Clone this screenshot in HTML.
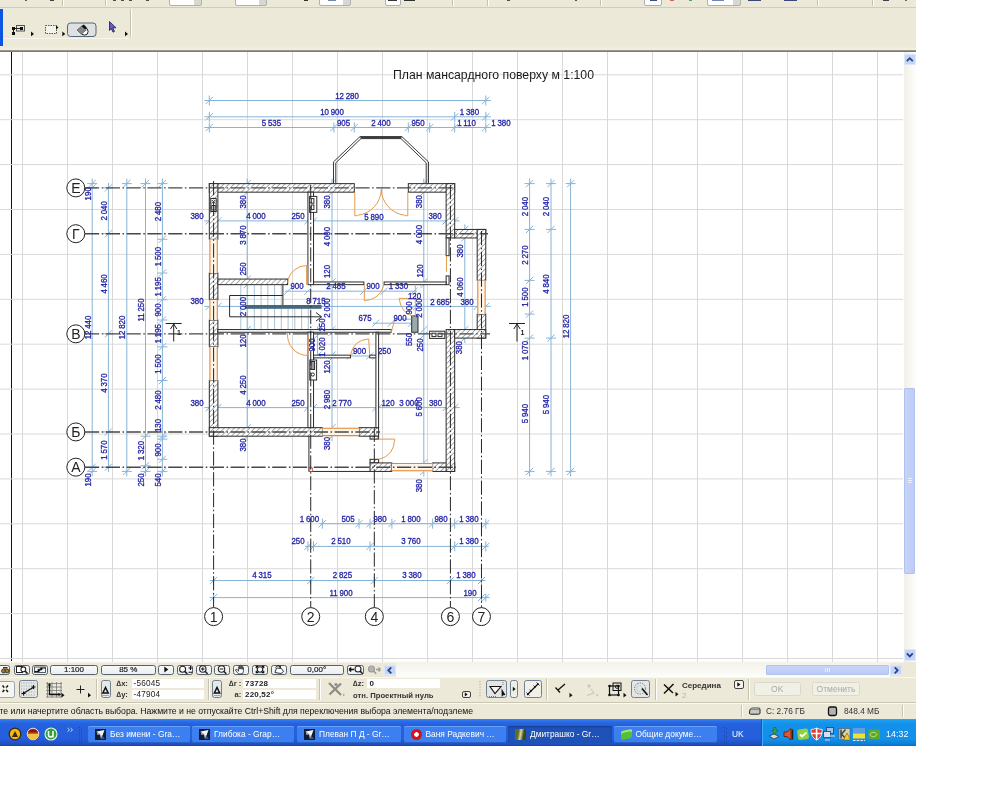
<!DOCTYPE html>
<html lang="ru"><head><meta charset="utf-8"><title>План мансардного поверху</title>
<style>
html,body{margin:0;padding:0;background:#fff}
body{width:1000px;height:800px;position:relative;overflow:hidden;font-family:"Liberation Sans",sans-serif;font-size:8px;color:#222}
.a{position:absolute}
.bg{background:#ece9d8}
.btn{-webkit-text-stroke:.2px #222;position:absolute;box-sizing:border-box;border:1px solid #56616e;border-radius:2.5px;background:linear-gradient(#f6f8fa,#eceff0);text-align:center;color:#222;font-size:8px;line-height:8.5px}
.fld{position:absolute;background:#fff;height:9px}
.lbl{position:absolute;font-weight:bold;font-size:7.6px;color:#333;white-space:nowrap;line-height:9px}
.val{position:absolute;font-size:8.2px;color:#222;white-space:nowrap;line-height:9px;letter-spacing:.2px}
.sep{position:absolute;width:1px;background:#c5c2b0;box-shadow:1px 0 0 #fff}
.tb{position:absolute;top:726px;height:17px;border-radius:2px;background:#3c7ff0;box-shadow:inset 0 1px 0 #6aa0fa,inset 0 -1px 0 #2a60c8;color:#fff;font-size:8.4px;line-height:16px;white-space:nowrap;overflow:hidden}
.tb span{position:absolute;left:22px;top:0}
.tb i{position:absolute;left:7px;top:3px;width:11px;height:11px;display:block}
</style></head>
<body>
<div id="ui" style="position:absolute;left:0;top:0;width:1000px;height:800px;will-change:transform;transform:translateZ(0)">
<div class="a bg" style="left:0;top:0;width:916px;height:8px;border-bottom:1px solid #cfccbb;box-sizing:border-box"></div>
<div class="a" style="left:169px;top:-3px;width:33px;height:9px;border:1px solid #a9b0b8;border-radius:2px;box-sizing:border-box;background:linear-gradient(90deg,#fff 24px,#d9d8d0 24px)"></div>
<div class="a" style="left:234.5px;top:-3px;width:32px;height:9px;border:1px solid #a9b0b8;border-radius:2px;box-sizing:border-box;background:linear-gradient(90deg,#fff 23px,#d9d8d0 23px)"></div>
<div class="a" style="left:318.5px;top:-3px;width:32px;height:9px;border:1px solid #a9b0b8;border-radius:2px;box-sizing:border-box;background:linear-gradient(90deg,#fff 23px,#d9d8d0 23px)"></div>
<div class="a" style="left:385px;top:-3px;width:16px;height:9px;border:1px solid #a9b0b8;border-radius:2px;box-sizing:border-box;background:linear-gradient(90deg,#fff 16px,#d9d8d0 16px)"></div>
<div class="a" style="left:644px;top:-3px;width:18px;height:9px;border:1px solid #a9b0b8;border-radius:2px;box-sizing:border-box;background:linear-gradient(90deg,#fff 18px,#d9d8d0 18px)"></div>
<div class="a" style="left:707px;top:-3px;width:34px;height:9px;border:1px solid #a9b0b8;border-radius:2px;box-sizing:border-box;background:linear-gradient(90deg,#fff 25px,#d9d8d0 25px)"></div>
<div class="a" style="left:25px;top:0;width:2px;height:1.2px;background:#444;opacity:.85"></div>
<div class="a" style="left:50px;top:0;width:4px;height:1.2px;background:#223;opacity:.85"></div>
<div class="a" style="left:113px;top:0;width:3px;height:1.2px;background:#333;opacity:.85"></div>
<div class="a" style="left:121px;top:0;width:3px;height:1.2px;background:#333;opacity:.85"></div>
<div class="a" style="left:129px;top:0;width:3px;height:1.2px;background:#333;opacity:.85"></div>
<div class="a" style="left:146px;top:0;width:3px;height:1.2px;background:#333;opacity:.85"></div>
<div class="a" style="left:304px;top:0;width:4px;height:1.2px;background:#111;opacity:.85"></div>
<div class="a" style="left:328px;top:0;width:8px;height:1.2px;background:#5a6ea8;opacity:.85"></div>
<div class="a" style="left:387.5px;top:0;width:9px;height:1.2px;background:#111;opacity:.85"></div>
<div class="a" style="left:404px;top:0;width:11px;height:1.2px;background:#111;opacity:.85"></div>
<div class="a" style="left:507px;top:0;width:3px;height:1.2px;background:#333;opacity:.85"></div>
<div class="a" style="left:575px;top:0;width:2px;height:1.2px;background:#333;opacity:.85"></div>
<div class="a" style="left:650px;top:0;width:7px;height:1.2px;background:#1c2a66;opacity:.85"></div>
<div class="a" style="left:669.5px;top:0;width:4px;height:1.2px;background:#d8463c;opacity:.85"></div>
<div class="a" style="left:689px;top:0;width:3px;height:1.2px;background:#3a9a3a;opacity:.85"></div>
<div class="a" style="left:712px;top:0;width:12px;height:1.2px;background:#5a6ea8;opacity:.85"></div>
<div class="a" style="left:748px;top:0;width:13px;height:1.2px;background:#1c2a66;opacity:.85"></div>
<div class="a" style="left:784px;top:0;width:13px;height:1.2px;background:#1c2a66;opacity:.85"></div>
<div class="a" style="left:883px;top:0;width:6px;height:1.2px;background:#223;opacity:.85"></div>
<div class="a" style="left:905px;top:0;width:2px;height:1.2px;background:#555;opacity:.85"></div>
<div class="sep" style="left:62px;top:0;height:6px"></div>
<div class="sep" style="left:105px;top:0;height:6px"></div>
<div class="sep" style="left:452px;top:0;height:6px"></div>
<div class="sep" style="left:487px;top:0;height:6px"></div>
<div class="sep" style="left:600px;top:0;height:6px"></div>
<div class="sep" style="left:816.5px;top:0;height:6px"></div>
<div class="sep" style="left:872px;top:0;height:6px"></div>
<div class="a bg" style="left:0;top:8px;width:916px;height:43px"></div>
<div class="a" style="left:0;top:9px;width:3px;height:39px;background:#0b55e0"></div>
<div class="a" style="left:4px;top:38px;width:125px;height:1px;background:#f7f6ee"></div>
<div class="sep" style="left:130px;top:9px;height:28px"></div>
<div class="a" style="left:0;top:46px;width:916px;height:4px;background:linear-gradient(#ece9d8,#f3f1e6)"></div>
<div class="a" style="left:0;top:50px;width:916px;height:2px;background:linear-gradient(#a7a595,#6f6e64)"></div>
<svg class="a" style="left:0;top:8px" width="140" height="44" viewBox="0 8 140 44"><g fill="none" stroke="#222" stroke-width="1"><rect x="16.5" y="25.5" width="8" height="5.5" stroke="#555"/><path d="M13.5 28.5H21.5M13.5 28.5V33.5"/></g><rect x="12" y="27" width="3" height="3" fill="#111"/><rect x="20" y="27" width="3" height="3" fill="#111"/><rect x="12" y="32" width="3" height="3" fill="#111"/><path d="M31 31.5l3 2.4-3 2.4z" fill="#111"/><rect x="45.5" y="25.5" width="11" height="8" fill="#f4f3ec" stroke="#555" stroke-width="1" stroke-dasharray="1.5 1"/><path d="M56 25.5l2.5 2-2.5 2z" fill="#111"/><path d="M62.3 31.5l3 2.4-3 2.4z" fill="#111"/><rect x="67.5" y="23" width="28.5" height="13.5" rx="3" fill="#dde1e2" stroke="#56677a" stroke-width="1"/><circle cx="84.5" cy="31.5" r="3.6" fill="#fff" stroke="#222" stroke-width="1"/><path d="M77 30l5-4.2 4.3 4.2-5 4.2z" fill="#888" stroke="#333" stroke-width=".5"/><path d="M81.5 26.2l2.2-1.8 3.2 3-2 1.8z" fill="#111"/><path d="M109.5 21.5l6.5 6.3h-3.3l1.8 3.6-1.5.8-1.8-3.7-1.7 2z" fill="#6a5acd" stroke="#1b1b4a" stroke-width=".8"/><path d="M125 31.5l3 2.4-3 2.4z" fill="#111"/></svg>
<div class="a" style="left:0;top:52px;width:903.5px;height:610px;background:#fff"></div>
<div class="a" style="left:11px;top:52px;width:1.3px;height:610px;background:#111"></div>
<div class="a" style="left:903.5px;top:52px;width:12.5px;height:610px;background:linear-gradient(90deg,#f1f0e8,#fdfdfb)"></div>
<div class="a" style="left:904px;top:53.5px;width:11.5px;height:11px;background:#c3d3f9;border-radius:2px;box-shadow:inset 0 0 0 1px #dde7fc"></div>
<svg class="a" style="left:904px;top:53.5px" width="12" height="11"><path d="M2.8 7.2L5.8 4.2L8.8 7.2" fill="none" stroke="#28457f" stroke-width="1.8"/></svg>
<div class="a" style="left:904px;top:388px;width:11px;height:186px;background:linear-gradient(90deg,#c9d5f8,#bccbf5);border-radius:2px;box-shadow:inset 0 0 0 1px #b1c2f1"></div>
<div class="a" style="left:907.5px;top:478px;width:4px;height:1px;background:#eef;box-shadow:0 2px 0 #eef,0 4px 0 #eef"></div>
<div class="a" style="left:904px;top:649px;width:11.5px;height:11.5px;background:#c3d3f9;border-radius:2px;box-shadow:inset 0 0 0 1px #dde7fc"></div>
<svg class="a" style="left:904px;top:649px" width="12" height="12"><path d="M2.8 4.4L5.8 7.4L8.8 4.4" fill="none" stroke="#28457f" stroke-width="1.8"/></svg>
<div class="a bg" style="left:0;top:662px;width:916px;height:15px"></div>
<div class="a" style="left:396px;top:663px;width:494px;height:13.5px;background:linear-gradient(#f3f2ea,#fdfdfa)"></div>
<div class="a" style="left:0;top:661px;width:903.5px;height:2px;background:linear-gradient(#fff,#f1efe4)"></div>
<div class="btn" style="left:-6px;top:664.5px;width:16px;height:10.2px"></div>
<div class="btn" style="left:13.6px;top:664.5px;width:16px;height:10.2px"></div>
<div class="btn" style="left:32px;top:664.5px;width:16px;height:10.2px"></div>
<div class="btn" style="left:50.4px;top:664.5px;width:47.2px;height:10.2px">1:100</div>
<div class="btn" style="left:100.5px;top:664.5px;width:55.5px;height:10.2px">85 %</div>
<div class="btn" style="left:158.3px;top:664.5px;width:16px;height:10.2px"></div>
<div class="btn" style="left:176.9px;top:664.5px;width:16.6px;height:10.2px"></div>
<div class="btn" style="left:195.6px;top:664.5px;width:16px;height:10.2px"></div>
<div class="btn" style="left:214.3px;top:664.5px;width:16px;height:10.2px"></div>
<div class="btn" style="left:233.2px;top:664.5px;width:16px;height:10.2px"></div>
<div class="btn" style="left:252px;top:664.5px;width:16px;height:10.2px"></div>
<div class="btn" style="left:270.8px;top:664.5px;width:16.5px;height:10.2px"></div>
<div class="btn" style="left:289.5px;top:664.5px;width:54.5px;height:10.2px">0,00°</div>
<div class="btn" style="left:347.2px;top:664.5px;width:16.5px;height:10.2px"></div>
<svg class="a" style="left:0;top:662px" width="400" height="15" viewBox="0 662 400 15"><circle cx="3.5" cy="671" r="2" fill="#b08020" stroke="#222" stroke-width=".8"/><circle cx="7" cy="671" r="2" fill="#b08020" stroke="#222" stroke-width=".8"/><path d="M3 668.5h4.5v-1.5h-4.5z" fill="#333"/><rect x="16.5" y="666.5" width="6" height="6" fill="#fff" stroke="#222" stroke-width="1"/><circle cx="23.3" cy="669.3" r="2.4" fill="#fff" stroke="#222" stroke-width="1.1"/><path d="M25 671l2.6 2.6" stroke="#222" stroke-width="1.6"/><path d="M34.5 671.5h4l3-3.5h4" fill="none" stroke="#111" stroke-width="1.2"/><rect x="34.5" y="667" width="11" height="5.5" fill="none" stroke="#333" stroke-width=".8"/><path d="M37 670l2.5-1.8v3.6zM43 669l-2.5-1.8v3.6z" fill="#111"/><path d="M164.3 666.6l4 3-4 3z" fill="#111"/><circle cx="182.6" cy="669.2" r="3" fill="#fff" stroke="#222" stroke-width="1.1"/><path d="M184.7 671.3l2.6 2.6" stroke="#222" stroke-width="1.6"/><path d="M188.5 668h4M190.5 666v4M188.5 672.2h4" stroke="#111" stroke-width="1.1"/><circle cx="202.8" cy="669" r="3.2" fill="#fff" stroke="#222" stroke-width="1.1"/><path d="M205 671.2l2.6 2.6" stroke="#222" stroke-width="1.6"/><path d="M201 669h3.6M202.8 667.2v3.6" stroke="#111" stroke-width="1"/><circle cx="221.5" cy="669" r="3.2" fill="#fff" stroke="#222" stroke-width="1.1"/><path d="M223.7 671.2l2.6 2.6" stroke="#222" stroke-width="1.6"/><path d="M219.7 669h3.6" stroke="#111" stroke-width="1"/><path d="M237.3 669.6l1.3 1.7v-4.6q.6-.8 1.2 0v2.4v-3.4q.6-.8 1.2 0v3.4v-3q.6-.8 1.2 0v3.2v-2q.6-.7 1.2 0v4.2q0 2.4-2.4 2.4h-1.5q-1.2 0-2-1.2l-2.1-2.8q.4-.9 1.9-.3z" fill="#fff" stroke="#222" stroke-width=".8" stroke-linejoin="round"/><circle cx="260" cy="669.5" r="2.7" fill="#fff" stroke="#222" stroke-width="1.1"/><path d="M256.3 668.3v-2h2M263.7 668.3v-2h-2M256.3 670.7v2h2M263.7 670.7v2h-2" stroke="#111" stroke-width="1.2" fill="none"/><path d="M275 672.5l1.5-4.5 5 .5 2 3-2.5 2z" fill="#fff" stroke="#222" stroke-width=".9"/><path d="M275.5 667.5c1-1.8 3-2 4.5-1" fill="none" stroke="#111" stroke-width="1"/><path d="M280.8 665.5l.3 2.4-2.3-.6z" fill="#111"/><path d="M349 669.5h5M349 669.5l2.2-2M349 669.5l2.2 2" stroke="#111" stroke-width="1.3" fill="none"/><circle cx="358" cy="669" r="3" fill="#fff" stroke="#222" stroke-width="1.1"/><path d="M360.1 671.1l2.6 2.6" stroke="#222" stroke-width="1.6"/><circle cx="371.5" cy="669" r="3" fill="#b4b4b0" stroke="#9a9a9a" stroke-width="1.1"/><path d="M373.6 671.1l2.6 2.6" stroke="#9a9a9a" stroke-width="1.6"/><path d="M376 669.5h4.5M380.5 669.5l-2-2M380.5 669.5l-2 2" stroke="#9a9a9a" stroke-width="1.3" fill="none"/></svg>
<div class="a" style="left:384px;top:664.5px;width:12px;height:10.5px;background:#c3d3f9;border-radius:2px;box-shadow:inset 0 0 0 1px #dde7fc"></div>
<svg class="a" style="left:384px;top:664.5px" width="12" height="11"><path d="M7.3 2.3L4.3 5.3L7.3 8.3" fill="none" stroke="#28457f" stroke-width="1.8"/></svg>
<div class="a" style="left:766px;top:665px;width:122.5px;height:9.5px;background:linear-gradient(#c9d5f8,#bccbf5);border-radius:2px;box-shadow:inset 0 0 0 1px #b1c2f1"></div>
<div class="a" style="left:825px;top:667.5px;width:1px;height:4px;background:#eef;box-shadow:2px 0 0 #eef,4px 0 0 #eef"></div>
<div class="a" style="left:890px;top:664.5px;width:12px;height:10.5px;background:#c3d3f9;border-radius:2px;box-shadow:inset 0 0 0 1px #dde7fc"></div>
<svg class="a" style="left:890px;top:664.5px" width="12" height="11"><path d="M4.7 2.3L7.7 5.3L4.7 8.3" fill="none" stroke="#28457f" stroke-width="1.8"/></svg>
<div class="a bg" style="left:0;top:677px;width:916px;height:26px;border-top:1px solid #f8f7f0;box-sizing:border-box"></div>
<div class="a" style="left:0;top:702px;width:916px;height:1px;background:#c9c6b4"></div>
<div class="btn" style="left:-4px;top:680.5px;width:19.2px;height:17.5px;border-color:#9aa3ad;background:#f6f5ef"></div>
<div class="btn" style="left:19.2px;top:680px;width:19.2px;height:18px;border-color:#6f8194;background:#e3e6e4"></div>
<div class="sep" style="left:95.5px;top:679px;height:20px"></div>
<div class="btn" style="left:100.5px;top:679.8px;width:10px;height:18.4px;border-color:#6f8194;background:#e6e9ea"></div>
<div class="btn" style="left:212px;top:679.8px;width:10px;height:18.4px;border-color:#6f8194;background:#e6e9ea"></div>
<div class="fld" style="left:132px;top:679px;width:71.5px"></div><div class="fld" style="left:132px;top:690px;width:71.5px"></div>
<div class="fld" style="left:243px;top:679px;width:73px"></div><div class="fld" style="left:243px;top:690px;width:73px"></div>
<div class="fld" style="left:367px;top:679px;width:73px"></div>
<div class="sep" style="left:207.5px;top:679px;height:21px"></div><div class="sep" style="left:318.5px;top:679px;height:21px"></div>
<div class="lbl" style="left:116.5px;top:679.3px">∆x:</div><div class="lbl" style="left:116.5px;top:690.3px">∆y:</div>
<div class="val" style="left:133.5px;top:679.3px">-56045</div><div class="val" style="left:133.5px;top:690.3px">-47904</div>
<div class="lbl" style="left:229px;top:679.3px">∆r :</div><div class="lbl" style="left:234.5px;top:690.3px">a:</div>
<div class="val" style="left:245px;top:679.3px;font-weight:bold;font-size:8px">73728</div><div class="val" style="left:245px;top:690.3px;font-weight:bold;font-size:8px">220,52°</div>
<div class="lbl" style="left:353px;top:679.3px">∆z:</div><div class="val" style="left:369.5px;top:679.3px;font-weight:bold;font-size:8px">0</div>
<div class="lbl" style="left:353px;top:690.5px;font-size:7.7px;letter-spacing:0">отн. Проектный нуль</div>
<div class="btn" style="left:461.6px;top:690.5px;width:9px;height:7.7px;border-color:#444;background:#f4f3ee;border-radius:2px"></div>
<div class="btn" style="left:486px;top:679.8px;width:21.2px;height:18.4px;border-color:#6f8194;background:#e3e6e4"></div>
<div class="btn" style="left:509.6px;top:679.8px;width:8.8px;height:18.4px;border-color:#6f8194;background:#eceee8"></div>
<div class="btn" style="left:523.5px;top:679.8px;width:18.5px;height:18.4px;border-color:#6f8194;background:#f1f1ea"></div>
<div class="sep" style="left:546.4px;top:679px;height:21px"></div>
<div class="btn" style="left:631.3px;top:680px;width:18.7px;height:18px;border-color:#6f8194;background:#e3e6e4"></div>
<div class="sep" style="left:654.5px;top:679px;height:21px"></div>
<div class="lbl" style="left:682px;top:680.5px;font-size:8px">Середина</div><div class="lbl" style="left:682px;top:691px;color:#b5b3a6;font-weight:normal;font-size:8px">2</div>
<div class="btn" style="left:733.7px;top:679.8px;width:10px;height:9.2px;border-color:#444;background:#f4f3ee;border-radius:2px"></div>
<div class="sep" style="left:748.4px;top:679px;height:21px"></div>
<div class="btn" style="left:753.5px;top:681.6px;width:47.5px;height:14.6px;border-color:#dad8ca;background:#f1f0e7;color:#a9a9a2;-webkit-text-stroke:0;font-size:8.5px;line-height:13px">OK</div>
<div class="btn" style="left:812px;top:681.6px;width:48px;height:14.6px;border-color:#dad8ca;background:#f1f0e7;color:#a9a9a2;-webkit-text-stroke:0;font-size:8.5px;line-height:13px">Отменить</div>
<svg class="a" style="left:0;top:677px" width="760" height="26" viewBox="0 677 760 26"><path d="M2.5 685.5l5.5 6.5M8 685.5l-5.5 6.5" stroke="#111" stroke-width="1.4"/><rect x="4" y="687.3" width="2.5" height="2.8" fill="#f6f5ef"/><g stroke="#888" stroke-width=".7" stroke-dasharray="1 1.5"><path d="M21 683h15M21 686h15M21 689h15M21 692h15M21 695h15"/></g><path d="M23 693.5l11-6.5" stroke="#111" stroke-width="1.3"/><path d="M21.5 693.5h4M23.5 691.5v4M31.5 687h4M33.5 685v4" stroke="#111" stroke-width="1.1"/><g stroke="#777" stroke-width=".8"><path d="M46 683.5h16M46 687h16M46 690.5h16M46 694h16M46 697h16M47.5 682v15.5M52 682v15.5M56.5 682v15.5M61 682v15.5"/></g><path d="M49.5 685v9.5h9.5" fill="none" stroke="#111" stroke-width="1.3"/><path d="M49.5 683l-1.8 2.5h3.6zM61 694.5l-2.5-1.8v3.6z" fill="#111"/><path d="M61.5 692.8l3 2.4-3 2.4z" fill="#111"/><path d="M76.5 689.5h8M80.5 685.5v8" stroke="#222" stroke-width="1"/><path d="M88 692.8l3 2.4-3 2.4z" fill="#111"/><path d="M102.8 693l2.7-5.5 2.7 5.5z" fill="none" stroke="#111" stroke-width="1.5"/><path d="M102 695.5h7" stroke="#9ab" stroke-width="1"/><path d="M214.3 693l2.7-5.5 2.7 5.5z" fill="none" stroke="#111" stroke-width="1.5"/><path d="M213.5 695.5h7" stroke="#9ab" stroke-width="1"/><path d="M329 683l12 12M341 683.5l-11.5 11" stroke="#8d8d85" stroke-width="2.3"/><circle cx="336" cy="684.5" r="1.6" fill="#8d8d85"/><path d="M343 693.5l2 1.5-2 1.5z" fill="#aaa"/><path d="M464.8 692.3l2.8 2.1-2.8 2.1z" fill="#111"/><path d="M480 681v17" stroke="#b9b6a4" stroke-width="1.2" stroke-dasharray="1.2 1.6"/><path d="M490 686.5h11l-6 7z" fill="#f4f4f0" stroke="#111" stroke-width="1.1"/><path d="M501.5 688.5l4 6.5-2.3.2-1.5 1.8z" fill="#111"/><path d="M489 696.5h8M503 682v3" stroke="#556" stroke-width=".8" stroke-dasharray="1 1"/><path d="M512.8 686.8l2.8 2.2-2.8 2.2z" fill="#111"/><path d="M527 695l11.5-11.5" stroke="#111" stroke-width="1.2"/><path d="M526.5 692.5l3 3M529.5 689.5l2 2M533.5 685.5l2 2M536.5 682.5l3 3" stroke="#111" stroke-width=".9"/><path d="M555.5 687.5l4.5 5M558 690l7-6" stroke="#111" stroke-width="1.3" fill="none"/><path d="M569.5 692.8l3 2.4-3 2.4z" fill="#111"/><path d="M589 684v4M587 686h4M590.5 688.5l3.5 4.5-7 2.5" stroke="#c3c1b4" stroke-width="1" fill="none"/><path d="M596.5 693.5l2 1.5-2 1.5z" fill="#c3c1b4"/><rect x="609.5" y="686" width="9" height="9" fill="none" stroke="#111" stroke-width="1.2"/><rect x="613" y="683" width="8" height="7.5" fill="none" stroke="#111" stroke-width="1"/><circle cx="617" cy="686.8" r="1.6" fill="none" stroke="#111" stroke-width=".9"/><circle cx="609.5" cy="686" r="1.3" fill="#111"/><circle cx="618.5" cy="686" r="1.3" fill="#111"/><circle cx="609.5" cy="695" r="1.3" fill="#111"/><circle cx="618.5" cy="695" r="1.3" fill="#111"/><path d="M623.5 692.8l3 2.4-3 2.4z" fill="#111"/><circle cx="640" cy="688.5" r="5.5" fill="none" stroke="#667" stroke-width="1" stroke-dasharray="1.2 1.3"/><circle cx="639.5" cy="688.5" r="2.8" fill="none" stroke="#99a" stroke-width=".8" stroke-dasharray="1 1.2"/><path d="M642 688.5l5.5 6.5" stroke="#111" stroke-width="1.7"/><path d="M664 684.5l9 8.5M673.5 684l-9.5 9.5" stroke="#111" stroke-width="1.5"/><path d="M675.5 691.8l3 2.4-3 2.4z" fill="#111"/><path d="M737.3 682.2l3.2 2.3-3.2 2.3z" fill="#111"/></svg>
<div class="a bg" style="left:0;top:703px;width:916px;height:16px;border-top:1px solid #fbfaf4;box-sizing:border-box"></div>
<div class="a" id="st" style="left:-0.5px;top:705.5px;font-size:8.7px;line-height:11px;color:#111;white-space:nowrap;letter-spacing:-.02px">те или начертите область выбора. Нажмите и не отпускайте Ctrl+Shift для переключения выбора элемента/подэлеме</div>
<div class="sep" style="left:741px;top:705px;height:12px"></div><div class="sep" style="left:902px;top:705px;height:12px"></div>
<svg class="a" style="left:745px;top:704px" width="100" height="15" viewBox="745 704 100 15"><path d="M750 709.5h10v3.5c0 .8-.6 1.2-1.2 1.2h-8.2c-.7 0-1.2-.5-1.2-1.2z" fill="#c9c9c4" stroke="#222" stroke-width="1"/><path d="M750 709.5l1.5-1.5h8l.5 1.5" fill="#eee" stroke="#222" stroke-width=".8"/><rect x="828.5" y="707" width="8" height="8.5" rx="1.8" fill="#b4b4ae" stroke="#111" stroke-width="1.3"/></svg>
<div class="val" style="left:766px;top:706.5px;font-size:8.3px;color:#333;letter-spacing:0">C: 2.76 ГБ</div>
<div class="val" style="left:844px;top:706.5px;font-size:8.3px;color:#333;letter-spacing:0">848.4 МБ</div>
<div class="a" style="left:0;top:719px;width:916px;height:26.5px;background:linear-gradient(#3a86f5 0,#2b6fe8 2px,#2561dc 5px,#255edb 20px,#1f50c4 25px,#1a43ad 26.5px)"></div>
<svg class="a" style="left:0;top:719px" width="90" height="27" viewBox="0 719 90 27"><circle cx="15" cy="734" r="5.8" fill="#f0b81c" stroke="#3a2a08" stroke-width="1.3"/><path d="M12 737l3-6 3 6z" fill="#3a2a08"/><circle cx="33" cy="734" r="5.8" fill="#e4502a" stroke="#f3d9c0" stroke-width="1"/><path d="M27.5 734a5.5 5.5 0 0 0 11 0z" fill="#f2c23a"/><path d="M28 732.5a5.5 5.5 0 0 1 10 0z" fill="#7a1a1a"/><circle cx="51" cy="734" r="6" fill="#2fa33a" stroke="#e8f6e8" stroke-width="1.1"/><path d="M48.5 731v4c0 2.5 4.5 2.5 4.5 0v-4M53 737.5v-2" stroke="#fff" stroke-width="1.5" fill="none"/><path d="M67.5 728l2 1.8-2 1.8M70.5 728l2 1.8-2 1.8" stroke="#cfe0ff" stroke-width=".9" fill="none"/><path d="M79.5 727v16M81.5 728v16" stroke="#1a48b0" stroke-width="1" stroke-dasharray="1 1.5"/></svg>
<div class="tb" style="left:88px;width:102px;"><i><svg width="11" height="11" viewBox="0 0 11 11" style="display:block"><rect width="11" height="11" fill="#0d1d36"/><path d="M1.5 2.5l8-1.5-3.5 9.5-.8-5z" fill="#f3f5f8"/><path d="M1.5 2.5l3.7 3-2.7.5z" fill="#9fb0c4"/><path d="M7 6l3 4h-4z" fill="#3e5876"/></svg></i><span>Без имени - Gra…</span></div>
<div class="tb" style="left:192px;width:102px;"><i><svg width="11" height="11" viewBox="0 0 11 11" style="display:block"><rect width="11" height="11" fill="#0d1d36"/><path d="M1.5 2.5l8-1.5-3.5 9.5-.8-5z" fill="#f3f5f8"/><path d="M1.5 2.5l3.7 3-2.7.5z" fill="#9fb0c4"/><path d="M7 6l3 4h-4z" fill="#3e5876"/></svg></i><span>Глибока - Grap…</span></div>
<div class="tb" style="left:297px;width:103.5px;"><i><svg width="11" height="11" viewBox="0 0 11 11" style="display:block"><rect width="11" height="11" fill="#0d1d36"/><path d="M1.5 2.5l8-1.5-3.5 9.5-.8-5z" fill="#f3f5f8"/><path d="M1.5 2.5l3.7 3-2.7.5z" fill="#9fb0c4"/><path d="M7 6l3 4h-4z" fill="#3e5876"/></svg></i><span>Плеван П Д - Gr…</span></div>
<div class="tb" style="left:403.5px;width:102.5px;"><i style="border-radius:50%;background:radial-gradient(circle,#fff 0 2px,#d41414 2.5px 100%)"></i><span>Ваня Радкевич …</span></div>
<div class="tb" style="left:508px;width:104px;background:#1e52b8;box-shadow:inset 0 1px 2px #163c8c"><i style="background:linear-gradient(100deg,#5f6d2a 30%,#d9d7a0 50%,#3d4a18 75%)"></i><span>Дмитрашко - Gr…</span></div>
<div class="tb" style="left:613.5px;width:103.5px;"><i style="background:#55c030;border-radius:2px;transform:skewY(-12deg);height:9px;top:4px;box-shadow:inset 0 2px 0 #a5e880"></i><span>Общие докуме…</span></div>
<div class="a" style="left:723.5px;top:727px;width:1px;height:16px;background:repeating-linear-gradient(#1a48b0 0 1px,transparent 1px 2.5px)"></div><div class="a" style="left:725.5px;top:728px;width:1px;height:16px;background:repeating-linear-gradient(#1a48b0 0 1px,transparent 1px 2.5px)"></div>
<div class="a" style="left:732px;top:728.5px;color:#fff;font-size:8.4px;line-height:11px">UK</div>
<div class="a" style="left:760.5px;top:719px;width:155.5px;height:26.5px;background:linear-gradient(#2aa6f6 0,#169bf0 2px,#1290ea 6px,#1290ea 20px,#0e7fd6 25px,#0a6ac0 27px);box-shadow:inset 1px 0 0 #0c5cb0,inset 2px 0 0 #38b0fa"></div>
<svg class="a" style="left:760px;top:719px" width="156" height="27" viewBox="760 719 156 27"><path d="M769 736l5-2 5 2.5-5 2.5z" fill="#d8d8d8" stroke="#333" stroke-width=".8"/><path d="M772 729.5h3v-2l3.5 3.2-3.5 3.2v-2h-3z" fill="#2ea83a" stroke="#1a5a20" stroke-width=".5" transform="rotate(90 775 730.5)"/><path d="M784 732h3l4-3.5v11.5l-4-3.5h-3z" fill="#e05a30" stroke="#5a1a0a" stroke-width=".8"/><path d="M792.5 729.5v10" stroke="#222" stroke-width="1.5"/><rect x="797.5" y="729" width="11" height="10.5" rx="2" fill="#8fd23a" transform="rotate(-8 803 734)"/><path d="M800 734.5l2 2 4.5-4" stroke="#fff" stroke-width="1.8" fill="none"/><path d="M811 729.5c2 0 4-.8 5.6-1.5 1.6.7 3.6 1.5 5.6 1.5 0 5-1.6 8.5-5.6 10.5-4-2-5.6-5.5-5.6-10.5z" fill="#e03a30" stroke="#fff" stroke-width=".8"/><path d="M816.6 728v12M811.5 733.5h10.5" stroke="#fff" stroke-width="1.6"/><rect x="826.5" y="727.5" width="7" height="6" fill="#9ec4ee" stroke="#2a4a80" stroke-width=".9"/><rect x="823.5" y="731.5" width="7" height="6" fill="#cfe2f8" stroke="#2a4a80" stroke-width=".9"/><path d="M825 740h5M830 736h5" stroke="#dde" stroke-width="1.2"/><rect x="839" y="728.5" width="11" height="11" fill="#d8d0b0" stroke="#555" stroke-width=".6"/><path d="M841 729.5v9M841.5 734l4-4.5M841.5 734l4 4.5" stroke="#444" stroke-width="1.5" fill="none"/><path d="M843.5 740l3.5-7 3.5 7z" fill="#f6d21c" stroke="#7a5a00" stroke-width=".6"/><rect x="853" y="728" width="12" height="5.5" fill="#5a9ee8"/><rect x="853" y="733.5" width="12" height="5" fill="#f3e02c"/><path d="M853 740.5h12" stroke="#e8e8ff" stroke-width="1" stroke-dasharray="2.5 1.2"/><rect x="868.5" y="729.5" width="11.5" height="9.5" rx="1" fill="#5aa82c"/><path d="M870 734.5c1.5-3 5-3 7 0-2 3-5.5 3-7 0z" fill="none" stroke="#c8eaa0" stroke-width="1"/></svg>
<div class="a" style="left:886px;top:728px;color:#fff;font-size:8.8px;line-height:12px;letter-spacing:.1px">14:32</div>
<svg width="1000" height="800" viewBox="0 0 1000 800" style="position:absolute;left:0;top:0">
<defs><pattern id="h" width="3.6" height="3.6" patternUnits="userSpaceOnUse" patternTransform="rotate(-45)"><rect width="3.6" height="3.6" fill="#fff"/><rect width="3.6" height="0.9" fill="#a2a2a2"/></pattern><style>.ax{fill:none;stroke:#484848;stroke-width:1.4;stroke-dasharray:14.2 2.5 1.6 2.5}.ac{fill:#fff;stroke:#222;stroke-width:1}.al{font:14px "Liberation Sans",sans-serif;text-anchor:middle;fill:#222}</style></defs>
<g stroke="#d9d9d9" stroke-width="1"><line x1="22.5" y1="52" x2="22.5" y2="662"/><line x1="67.5" y1="52" x2="67.5" y2="662"/><line x1="112.5" y1="52" x2="112.5" y2="662"/><line x1="157.5" y1="52" x2="157.5" y2="662"/><line x1="202.5" y1="52" x2="202.5" y2="662"/><line x1="247.5" y1="52" x2="247.5" y2="662"/><line x1="292.5" y1="52" x2="292.5" y2="662"/><line x1="337.5" y1="52" x2="337.5" y2="662"/><line x1="382.5" y1="52" x2="382.5" y2="662"/><line x1="427.5" y1="52" x2="427.5" y2="662"/><line x1="472.5" y1="52" x2="472.5" y2="662"/><line x1="517.5" y1="52" x2="517.5" y2="662"/><line x1="562.5" y1="52" x2="562.5" y2="662"/><line x1="607.5" y1="52" x2="607.5" y2="662"/><line x1="652.5" y1="52" x2="652.5" y2="662"/><line x1="697.5" y1="52" x2="697.5" y2="662"/><line x1="742.5" y1="52" x2="742.5" y2="662"/><line x1="787.5" y1="52" x2="787.5" y2="662"/><line x1="832.5" y1="52" x2="832.5" y2="662"/><line x1="877.5" y1="52" x2="877.5" y2="662"/><line x1="0" y1="74.8" x2="903" y2="74.8"/><line x1="0" y1="119.7" x2="903" y2="119.7"/><line x1="0" y1="164.6" x2="903" y2="164.6"/><line x1="0" y1="209.5" x2="903" y2="209.5"/><line x1="0" y1="254.4" x2="903" y2="254.4"/><line x1="0" y1="299.3" x2="903" y2="299.3"/><line x1="0" y1="344.2" x2="903" y2="344.2"/><line x1="0" y1="389.1" x2="903" y2="389.1"/><line x1="0" y1="434" x2="903" y2="434"/><line x1="0" y1="478.9" x2="903" y2="478.9"/><line x1="0" y1="523.8" x2="903" y2="523.8"/><line x1="0" y1="568.7" x2="903" y2="568.7"/><line x1="0" y1="613.6" x2="903" y2="613.6"/><line x1="0" y1="658.5" x2="903" y2="658.5"/></g>
<g fill="none" stroke="#86b4d8" stroke-width="1">
<path d="M204.3 100.5H490.8"/><path d="M205.7 104.1L212.9 96.9"/><path d="M209.3 95.5V105.5"/><path d="M482.1 104.1L489.4 96.9"/><path d="M485.8 95.5V105.5"/>
<path d="M204.3 116.8H490.8"/><path d="M205.7 120.4L212.9 113.2"/><path d="M209.3 111.8V121.8"/><path d="M451.1 120.4L458.3 113.2"/><path d="M454.7 111.8V121.8"/><path d="M482.1 120.4L489.4 113.2"/><path d="M485.8 111.8V121.8"/>
<path d="M204.3 127.5H490.8"/><path d="M205.7 131.1L212.9 123.9"/><path d="M209.3 122.5V132.5"/><path d="M330.3 131.1L337.5 123.9"/><path d="M333.9 122.5V132.5"/><path d="M350.7 131.1L357.9 123.9"/><path d="M354.3 122.5V132.5"/><path d="M404.7 131.1L411.9 123.9"/><path d="M408.3 122.5V132.5"/><path d="M426.1 131.1L433.3 123.9"/><path d="M429.7 122.5V132.5"/><path d="M451.1 131.1L458.3 123.9"/><path d="M454.7 122.5V132.5"/><path d="M482.1 131.1L489.4 123.9"/><path d="M485.8 122.5V132.5"/>
<path d="M204.3 220.9H459.7"/><path d="M205.7 224.5L212.9 217.3"/><path d="M214.3 224.5L221.5 217.3"/><path d="M304.3 224.5L311.5 217.3"/><path d="M309.9 224.5L317.1 217.3"/><path d="M442.5 224.5L449.7 217.3"/><path d="M451.1 224.5L458.3 217.3"/>
<path d="M284.7 291.2H417.1"/><path d="M284.1 294.8L291.3 287.6"/><path d="M304.3 294.8L311.5 287.6"/><path d="M360.2 294.8L367.5 287.6"/><path d="M380.5 294.8L387.7 287.6"/><path d="M410.4 294.8L417.7 287.6"/>
<path d="M204.3 306.4H490.8"/><path d="M205.7 310L212.9 302.8"/><path d="M214.3 310L221.5 302.8"/><path d="M410.4 310L417.7 302.8"/><path d="M413.1 310L420.4 302.8"/><path d="M473.6 310L480.8 302.8"/><path d="M482.1 310L489.4 302.8"/>
<path d="M372.9 323.2H414.7"/><path d="M372.3 326.8L379.5 319.6"/><path d="M387.7 326.8L394.9 319.6"/><path d="M408.1 326.8L415.3 319.6"/>
<path d="M347.5 356H379.1"/><path d="M346.9 359.6L354.1 352.4"/><path d="M366.1 359.6L373.3 352.4"/><path d="M372.5 359.6L379.7 352.4"/>
<path d="M204.3 407.6H459.7"/><path d="M205.7 411.2L212.9 404"/><path d="M214.3 411.2L221.5 404"/><path d="M304.3 411.2L311.5 404"/><path d="M309.9 411.2L317.1 404"/><path d="M372.3 411.2L379.5 404"/><path d="M375 411.2L382.2 404"/><path d="M442.5 411.2L449.7 404"/><path d="M451.1 411.2L458.3 404"/>
<path d="M319.4 523.7H488.8"/><path d="M318.8 527.3L326 520.1"/><path d="M322.4 518.7V528.7"/><path d="M355.4 527.3L362.6 520.1"/><path d="M359 518.7V528.7"/><path d="M366.4 527.3L373.6 520.1"/><path d="M370 518.7V528.7"/><path d="M388.3 527.3L395.5 520.1"/><path d="M391.9 518.7V528.7"/><path d="M429 527.3L436.2 520.1"/><path d="M432.6 518.7V528.7"/><path d="M451.1 527.3L458.3 520.1"/><path d="M454.7 518.7V528.7"/><path d="M482.1 527.3L489.4 520.1"/><path d="M485.8 518.7V528.7"/>
<path d="M304.9 546.4H488.8"/><path d="M304.3 550L311.5 542.8"/><path d="M307.9 541.4V551.4"/><path d="M309.9 550L317.1 542.8"/><path d="M313.5 541.4V551.4"/><path d="M366.4 550L373.6 542.8"/><path d="M370 541.4V551.4"/><path d="M451.1 550L458.3 542.8"/><path d="M454.7 541.4V551.4"/><path d="M482.1 550L489.4 542.8"/><path d="M485.8 541.4V551.4"/>
<path d="M209.6 580.5H485.5"/><path d="M210 584.1L217.2 576.9"/><path d="M213.6 576.5V584.5"/><path d="M307.1 584.1L314.3 576.9"/><path d="M310.7 576.5V584.5"/><path d="M370.7 584.1L377.9 576.9"/><path d="M374.3 576.5V584.5"/><path d="M446.8 584.1L454 576.9"/><path d="M450.4 576.5V584.5"/><path d="M477.9 584.1L485.1 576.9"/><path d="M481.5 576.5V584.5"/>
<path d="M209.6 597.6H489.8"/><path d="M210 601.2L217.2 594"/><path d="M213.6 593.6V601.6"/><path d="M477.9 601.2L485.1 594"/><path d="M481.5 593.6V601.6"/><path d="M482.1 601.2L489.4 594"/><path d="M485.8 593.6V601.6"/>
<path d="M92.2 178.6V476.4"/><path d="M88.6 187.2L95.8 180"/><path d="M87.2 183.6H97.2"/><path d="M88.6 191.5L95.8 184.3"/><path d="M87.2 187.9H97.2"/><path d="M88.6 470.8L95.8 463.6"/><path d="M87.2 467.2H97.2"/><path d="M88.6 475L95.8 467.8"/><path d="M87.2 471.4H97.2"/>
<path d="M108.4 182.9V472.2"/><path d="M104.8 191.5L112 184.3"/><path d="M103.4 187.9H113.4"/><path d="M104.8 237.3L112 230.1"/><path d="M103.4 233.7H113.4"/><path d="M104.8 337.4L112 330.2"/><path d="M103.4 333.8H113.4"/><path d="M104.8 435.5L112 428.3"/><path d="M103.4 431.9H113.4"/><path d="M104.8 470.8L112 463.6"/><path d="M103.4 467.2H113.4"/>
<path d="M126.8 178.6V476.4"/><path d="M123.2 187.2L130.4 180"/><path d="M121.8 183.6H131.8"/><path d="M123.2 475L130.4 467.8"/><path d="M121.8 471.4H131.8"/>
<path d="M145.5 178.6V476.4"/><path d="M141.9 187.2L149.1 180"/><path d="M140.5 183.6H150.5"/><path d="M141.9 439.8L149.1 432.6"/><path d="M140.5 436.2H150.5"/><path d="M141.9 469.4L149.1 462.2"/><path d="M140.5 465.8H150.5"/><path d="M141.9 475L149.1 467.8"/><path d="M140.5 471.4H150.5"/>
<path d="M162.4 178.6V476.4"/><path d="M158.8 187.2L166 180"/><path d="M157.4 183.6H167.4"/><path d="M158.8 242.9L166 235.7"/><path d="M157.4 239.3H167.4"/><path d="M158.8 276.6L166 269.4"/><path d="M157.4 273H167.4"/><path d="M158.8 303.4L166 296.2"/><path d="M157.4 299.8H167.4"/><path d="M158.8 323.6L166 316.4"/><path d="M157.4 320H167.4"/><path d="M158.8 350.5L166 343.2"/><path d="M157.4 346.9H167.4"/><path d="M158.8 384.1L166 376.9"/><path d="M157.4 380.5H167.4"/><path d="M158.8 439.8L166 432.6"/><path d="M157.4 436.2H167.4"/><path d="M158.8 442.7L166 435.5"/><path d="M157.4 439.1H167.4"/><path d="M158.8 462.9L166 455.7"/><path d="M157.4 459.3H167.4"/><path d="M158.8 475L166 467.8"/><path d="M157.4 471.4H167.4"/>
<path d="M529.6 178.6V476.4"/><path d="M526 187.2L533.2 180"/><path d="M524.6 183.6H534.6"/><path d="M526 233L533.2 225.8"/><path d="M524.6 229.4H534.6"/><path d="M526 284L533.2 276.8"/><path d="M524.6 280.4H534.6"/><path d="M526 317.7L533.2 310.5"/><path d="M524.6 314.1H534.6"/><path d="M526 341.7L533.2 334.5"/><path d="M524.6 338.1H534.6"/><path d="M526 475L533.2 467.8"/><path d="M524.6 471.4H534.6"/>
<path d="M551 178.6V476.4"/><path d="M547.4 187.2L554.6 180"/><path d="M546 183.6H556"/><path d="M547.4 233L554.6 225.8"/><path d="M546 229.4H556"/><path d="M547.4 341.7L554.6 334.5"/><path d="M546 338.1H556"/><path d="M547.4 475L554.6 467.8"/><path d="M546 471.4H556"/>
<path d="M570.6 178.6V476.4"/><path d="M567 187.2L574.2 180"/><path d="M565.6 183.6H575.6"/><path d="M567 475L574.2 467.8"/><path d="M565.6 471.4H575.6"/>
<path d="M247.2 178.6V441.2"/><path d="M243.6 187.2L250.8 180"/><path d="M243.6 195.8L250.8 188.6"/><path d="M243.6 282.7L250.8 275.4"/><path d="M243.6 288.3L250.8 281.1"/><path d="M243.6 333.2L250.8 326"/><path d="M243.6 335.9L250.8 328.6"/><path d="M243.6 431.3L250.8 424.1"/><path d="M243.6 439.8L250.8 432.6"/>
<path d="M332 178.6V441.2"/><path d="M328.4 187.2L335.6 180"/><path d="M328.4 195.8L335.6 188.6"/><path d="M328.4 285.6L335.6 278.4"/><path d="M328.4 288.3L335.6 281.1"/><path d="M328.4 333.2L335.6 326"/><path d="M328.4 335.9L335.6 328.6"/><path d="M328.4 358.8L335.6 351.5"/><path d="M328.4 361.5L335.6 354.2"/><path d="M328.4 431.3L335.6 424.1"/><path d="M328.4 439.8L335.6 432.6"/>
<path d="M317.6 326.6V358.4"/><path d="M314 333.2L321.2 326"/><path d="M314 338.8L321.2 331.6"/><path d="M314 359L321.2 351.8"/>
<path d="M423.8 178.6V476.4"/><path d="M420.2 187.2L427.4 180"/><path d="M420.2 195.8L427.4 188.6"/><path d="M420.2 285.6L427.4 278.4"/><path d="M420.2 288.3L427.4 281.1"/><path d="M420.2 333.2L427.4 326"/><path d="M420.2 338.8L427.4 331.6"/><path d="M420.2 466.5L427.4 459.3"/><path d="M420.2 475L427.4 467.8"/>
<path d="M464.8 224.4V343.1"/><path d="M461.2 233L468.4 225.8"/><path d="M461.2 241.6L468.4 234.4"/><path d="M461.2 333.2L468.4 326"/><path d="M461.2 341.7L468.4 334.5"/>
</g>
<g stroke="#a9c3d6" stroke-width="1"><path d="M240.8 284.66V329.56"/><path d="M247.6 284.66V329.56"/><path d="M254.3 284.66V329.56"/><path d="M261.1 284.66V329.56"/><path d="M267.8 284.66V329.56"/><path d="M274.6 284.66V329.56"/><path d="M281.3 284.66V329.56"/><path d="M288.1 306.9V329.56"/><path d="M294.8 306.9V329.56"/><path d="M301.6 306.9V329.56"/><path d="M308.3 306.9V329.56"/></g>
<g fill="none" stroke="#2b2b2b" stroke-width="1"><path d="M282.9 284.66V305.3"/><path d="M282.9 295.5H229.6V316.8H321.6"/><path d="M316 312.6L321.6 316.8L316 321"/></g>
<rect x="244.8" y="305" width="76.8" height="3.8" fill="#46687c"/>
<g stroke="#2b2b2b" stroke-width="1"><rect x="209.32" y="183.63" width="144.97" height="8.54" fill="url(#h)"/><rect x="408.31" y="183.63" width="46.37" height="8.54" fill="url(#h)"/><rect x="209.32" y="183.63" width="8.56" height="55.68" fill="url(#h)"/><rect x="209.32" y="272.99" width="8.56" height="26.82" fill="url(#h)"/><rect x="209.32" y="320.02" width="8.56" height="26.83" fill="url(#h)"/><rect x="209.32" y="380.52" width="8.56" height="55.68" fill="url(#h)"/><rect x="209.32" y="427.67" width="113.12" height="8.53" fill="url(#h)"/><rect x="358.97" y="427.67" width="19.63" height="8.53" fill="url(#h)"/><rect x="370.04" y="436.2" width="8.56" height="2.92" fill="url(#h)"/><rect x="370.04" y="459.32" width="8.56" height="3.59" fill="url(#h)"/><rect x="370.04" y="462.91" width="21.84" height="8.53" fill="url(#h)"/><rect x="432.62" y="462.91" width="22.06" height="8.53" fill="url(#h)"/><rect x="446.13" y="183.63" width="8.55" height="54.33" fill="url(#h)"/><rect x="446.13" y="237.96" width="2.92" height="17.74" fill="#fff"/><rect x="446.13" y="275.9" width="2.92" height="8.76" fill="#fff"/><rect x="446.13" y="329.56" width="8.55" height="141.88" fill="url(#h)"/><rect x="454.68" y="229.43" width="31.07" height="8.53" fill="url(#h)"/><rect x="477.19" y="229.43" width="8.56" height="50.96" fill="url(#h)"/><rect x="477.19" y="314.07" width="8.56" height="24.02" fill="url(#h)"/><rect x="454.68" y="329.56" width="31.07" height="8.53" fill="url(#h)"/><rect x="217.88" y="279.05" width="69.78" height="5.61" fill="url(#h)"/><rect x="307.92" y="192.17" width="5.62" height="92.49" fill="#fff"/><rect x="313.54" y="281.97" width="50.31" height="2.69" fill="#fff"/><rect x="384.11" y="281.97" width="62.02" height="2.69" fill="#fff"/><rect x="411.69" y="315.87" width="6.3" height="16.38" fill="#9aa"/><rect x="217.88" y="329.56" width="173.39" height="2.69" fill="#fff"/><rect x="307.92" y="332.25" width="5.62" height="95.42" fill="#fff"/><rect x="313.54" y="355.15" width="36.92" height="2.7" fill="#fff"/><rect x="369.71" y="355.15" width="8.89" height="2.7" fill="#fff"/><rect x="375.9" y="332.25" width="2.7" height="95.42" fill="#fff"/></g>
<g fill="none"><rect x="209.32" y="239.31" width="8.56" height="33.68" fill="#fdf4ea" stroke="none"/><path d="M209.92 239.31V272.99M217.28 239.31V272.99" stroke="#e6852a" stroke-width="1.05"/><rect x="209.32" y="299.81" width="8.56" height="20.21" fill="#fdf4ea" stroke="none"/><path d="M209.92 299.81V320.02M217.28 299.81V320.02" stroke="#e6852a" stroke-width="1.05"/><rect x="209.32" y="346.85" width="8.56" height="33.67" fill="#fdf4ea" stroke="none"/><path d="M209.92 346.85V380.52M217.28 346.85V380.52" stroke="#e6852a" stroke-width="1.05"/><rect x="477.19" y="280.39" width="8.56" height="33.68" fill="#fdf4ea" stroke="none"/><path d="M477.79 280.39V314.07M485.15 280.39V314.07" stroke="#e6852a" stroke-width="1.05"/><rect x="322.44" y="427.67" width="36.53" height="8.53" fill="#fdf4ea" stroke="none"/><path d="M322.44 428.27000000000004H358.97M322.44 435.59999999999997H358.97" stroke="#e6852a" stroke-width="1.05"/><rect x="391.88" y="462.91" width="40.74" height="8.53" fill="#fdf4ea" stroke="none"/><path d="M391.88 463.51000000000005H432.62M391.88 470.84H432.62" stroke="#e6852a" stroke-width="1.05"/></g>
<g stroke="#2b2b2b" stroke-width="1"><rect x="210.8" y="198.5" width="5.4" height="13" fill="#fff"/><rect x="211.8" y="205.5" width="3.4" height="4.5" fill="none"/><path d="M211.8 200L215.2 203.5M215.2 200L211.8 203.5"/><rect x="309.6" y="196.4" width="7.2" height="16" fill="#fff"/><rect x="311.3" y="198.6" width="2.6" height="4.6" fill="none"/><rect x="311.3" y="205" width="2.6" height="4.6" fill="none"/><rect x="309.8" y="360" width="6.8" height="20" fill="#fff"/><rect x="311" y="361.5" width="3.6" height="8" fill="#99a"/><circle cx="312.8" cy="374.5" r="1.6" fill="none"/><rect x="429.6" y="331.2" width="15.2" height="7.2" fill="#fff"/><rect x="432" y="333.2" width="4" height="3.4" fill="none"/><rect x="438" y="333.2" width="4" height="3.4" fill="none"/></g>
<g fill="none" stroke="#3a3a3a" stroke-width="1"><path d="M333.5 183.5V161.9L360 136.6H401.9L428.5 161.9V183.5"/><path d="M335.8 183.5V162.8L361 138.6H401L426.2 162.8V183.5"/><path d="M360.5 137.6H401.5" stroke-width="2"/></g>
<path d="M308.92 436.2V471.44H370.04" fill="none" stroke="#2b2b2b" stroke-width="1"/><rect x="308.92" y="467.94" width="3.5" height="3.5" fill="none" stroke="#c0504d" stroke-width="0.8"/>
<g fill="none" stroke="#e59a4a" stroke-width="1"><path d="M354.79 192.17V215.7H357.8M357.8 215.2A26.5 26.5 0 0 0 381.3 189.2"/><path d="M407.81 192.17V215.7H404.8M404.8 215.2A26.5 26.5 0 0 1 381.3 189.2"/><path d="M306.92 284.66V265.4" stroke-width="1.6"/><path d="M306.92 265.4A19.3 19.3 0 0 0 287.66 282.7"/><path d="M364.35 284.66V300.66M364.35 300.66Q380.1 299.7 384.11 284.66"/><path d="M414.05 298.4H399.1M399.1 298.4Q401.1 313.5 414.05 316.5"/><path d="M415.35 284.66V316.5" stroke="#d8a878"/><path d="M391.27 332.25L394.8 319.2"/><path d="M394.8 319.2H411.46" stroke="#86b4d8"/><path d="M307.92 335.17V355.5" stroke-width="1.4"/><path d="M287.6 333.2A20.3 20.3 0 0 0 307.92 355.5"/><path d="M369.71 355.15L368.7 338.9M368.7 338.9Q353.5 339.9 350.46 355.15"/><path d="M378.6 439.12H394.8M394.8 439.12Q393.8 456.3 378.6 459.32"/><path d="M446.43 255.7V271.71"/></g>
<g><path d="M85 187.9H455" class="ax"/><circle cx="75.8" cy="187.9" r="9" class="ac"/><text x="75.8" y="193.1" class="al">Е</text><path d="M85 233.7H488" class="ax"/><circle cx="75.8" cy="233.7" r="9" class="ac"/><text x="75.8" y="238.9" class="al">Г</text><path d="M85 333.83H490" class="ax"/><circle cx="75.8" cy="333.83" r="9" class="ac"/><text x="75.8" y="339" class="al">В</text><path d="M85 431.93H380" class="ax"/><circle cx="75.8" cy="431.93" r="9" class="ac"/><text x="75.8" y="437.1" class="al">Б</text><path d="M85 467.18H456" class="ax"/><circle cx="75.8" cy="467.18" r="9" class="ac"/><text x="75.8" y="472.4" class="al">А</text><path d="M213.6 181V607.5" class="ax" style="stroke-width:1;stroke:#262626"/><circle cx="213.6" cy="616.6" r="9" class="ac"/><text x="213.6" y="621.8" class="al">1</text><path d="M310.73 185V607.5" class="ax" style="stroke-width:1;stroke:#262626"/><circle cx="310.73" cy="616.6" r="9" class="ac"/><text x="310.73" y="621.8" class="al">2</text><path d="M374.32 427.67V607.5" class="ax" style="stroke-width:1;stroke:#262626"/><circle cx="374.32" cy="616.6" r="9" class="ac"/><text x="374.32" y="621.8" class="al">4</text><path d="M450.41 185V607.5" class="ax" style="stroke-width:1;stroke:#262626"/><circle cx="450.41" cy="616.6" r="9" class="ac"/><text x="450.41" y="621.8" class="al">6</text><path d="M481.47 231V607.5" class="ax" style="stroke-width:1;stroke:#262626"/><circle cx="481.47" cy="616.6" r="9" class="ac"/><text x="481.47" y="621.8" class="al">7</text></g>
<g fill="none" stroke="#222" stroke-width="1"><path d="M165.7 323.5H181.7M173.7 323.5V341.5M170.5 329L173.7 324L176.89999999999998 329"/><path d="M509 323.5H525M517 323.5V341.5M513.8 329L517 324L520.2 329"/></g>
<text x="177" y="335" font-size="7" font-weight="bold" fill="#222" font-family="Liberation Sans, sans-serif">1</text><text x="520.5" y="335" font-size="7" font-weight="bold" fill="#222" font-family="Liberation Sans, sans-serif">1</text>
<g font-family="Liberation Sans, sans-serif" font-size="8.5" fill="#2323a6" stroke="#2323a6" stroke-width=".3" text-anchor="middle" word-spacing="-.5"><text transform="translate(347 98.5) scale(.93 1)">12 280</text><text transform="translate(332 114.8) scale(.93 1)">10 900</text><text transform="translate(469.5 114.8) scale(.93 1)">1 380</text><text transform="translate(271.5 125.8) scale(.93 1)">5 535</text><text transform="translate(343.5 125.8) scale(.93 1)">905</text><text transform="translate(381 125.8) scale(.93 1)">2 400</text><text transform="translate(418 125.8) scale(.93 1)">950</text><text transform="translate(466.5 125.8) scale(.93 1)">1 110</text><text transform="translate(501 125.8) scale(.93 1)">1 380</text><text transform="translate(197 219) scale(.93 1)">380</text><text transform="translate(256 219) scale(.93 1)">4 000</text><text transform="translate(298 219) scale(.93 1)">250</text><text transform="translate(374 219.5) scale(.93 1)">5 890</text><text transform="translate(435 219) scale(.93 1)">380</text><text transform="translate(297 288.5) scale(.93 1)">900</text><text transform="translate(336 288.5) scale(.93 1)">2 485</text><text transform="translate(373 288.5) scale(.93 1)">900</text><text transform="translate(398.5 288.5) scale(.93 1)">1 330</text><text transform="translate(197 304) scale(.93 1)">380</text><text transform="translate(316 303.5) scale(.93 1)">8 715</text><text transform="translate(414.5 298.5) scale(.93 1)">120</text><text transform="translate(440 304.5) scale(.93 1)">2 685</text><text transform="translate(467 304.5) scale(.93 1)">380</text><text transform="translate(365 321.3) scale(.93 1)">675</text><text transform="translate(400 321.3) scale(.93 1)">900</text><text transform="translate(359.5 353.5) scale(.93 1)">900</text><text transform="translate(384.5 353.5) scale(.93 1)">250</text><text transform="translate(197 405.6) scale(.93 1)">380</text><text transform="translate(256 405.6) scale(.93 1)">4 000</text><text transform="translate(298 405.6) scale(.93 1)">250</text><text transform="translate(342 405.6) scale(.93 1)">2 770</text><text transform="translate(388 405.6) scale(.93 1)">120</text><text transform="translate(409 405.6) scale(.93 1)">3 000</text><text transform="translate(435.5 405.6) scale(.93 1)">380</text><text transform="translate(309.5 521.5) scale(.93 1)">1 600</text><text transform="translate(348 521.5) scale(.93 1)">505</text><text transform="translate(380 521.5) scale(.93 1)">980</text><text transform="translate(411 521.5) scale(.93 1)">1 800</text><text transform="translate(441 521.5) scale(.93 1)">980</text><text transform="translate(469 521.5) scale(.93 1)">1 380</text><text transform="translate(298 544.3) scale(.93 1)">250</text><text transform="translate(341 544.3) scale(.93 1)">2 510</text><text transform="translate(411 544.3) scale(.93 1)">3 760</text><text transform="translate(469 544.3) scale(.93 1)">1 380</text><text transform="translate(262 578.4) scale(.93 1)">4 315</text><text transform="translate(342.5 578.4) scale(.93 1)">2 825</text><text transform="translate(412 578.4) scale(.93 1)">3 380</text><text transform="translate(466 578.4) scale(.93 1)">1 380</text><text transform="translate(341 595.5) scale(.93 1)">11 900</text><text transform="translate(470 595.5) scale(.93 1)">190</text><text transform="translate(90.5 193.8) rotate(-90) scale(.93 1)">190</text><text transform="translate(90.5 327.5) rotate(-90) scale(.93 1)">12 440</text><text transform="translate(90.5 480) rotate(-90) scale(.93 1)">190</text><text transform="translate(106.5 210.8) rotate(-90) scale(.93 1)">2 040</text><text transform="translate(106.5 283.9) rotate(-90) scale(.93 1)">4 460</text><text transform="translate(106.5 383) rotate(-90) scale(.93 1)">4 370</text><text transform="translate(106.5 450) rotate(-90) scale(.93 1)">1 570</text><text transform="translate(125 327.5) rotate(-90) scale(.93 1)">12 820</text><text transform="translate(143.7 310) rotate(-90) scale(.93 1)">11 250</text><text transform="translate(143.7 450.5) rotate(-90) scale(.93 1)">1 320</text><text transform="translate(143.7 480) rotate(-90) scale(.93 1)">250</text><text transform="translate(160.6 211.5) rotate(-90) scale(.93 1)">2 480</text><text transform="translate(160.6 256.5) rotate(-90) scale(.93 1)">1 500</text><text transform="translate(160.6 286.8) rotate(-90) scale(.93 1)">1 195</text><text transform="translate(160.6 310) rotate(-90) scale(.93 1)">900</text><text transform="translate(160.6 333.7) rotate(-90) scale(.93 1)">1 195</text><text transform="translate(160.6 364) rotate(-90) scale(.93 1)">1 500</text><text transform="translate(160.6 400) rotate(-90) scale(.93 1)">2 480</text><text transform="translate(160.6 425.5) rotate(-90) scale(.93 1)">130</text><text transform="translate(160.6 450) rotate(-90) scale(.93 1)">900</text><text transform="translate(160.6 480) rotate(-90) scale(.93 1)">540</text><text transform="translate(527.8 206.5) rotate(-90) scale(.93 1)">2 040</text><text transform="translate(527.8 255) rotate(-90) scale(.93 1)">2 270</text><text transform="translate(527.8 297) rotate(-90) scale(.93 1)">1 500</text><text transform="translate(527.8 350.5) rotate(-90) scale(.93 1)">1 070</text><text transform="translate(527.8 413.5) rotate(-90) scale(.93 1)">5 940</text><text transform="translate(549.2 206.5) rotate(-90) scale(.93 1)">2 040</text><text transform="translate(549.2 284) rotate(-90) scale(.93 1)">4 840</text><text transform="translate(549.2 404.5) rotate(-90) scale(.93 1)">5 940</text><text transform="translate(568.8 326.5) rotate(-90) scale(.93 1)">12 820</text><text transform="translate(245.6 202) rotate(-90) scale(.93 1)">380</text><text transform="translate(245.6 235) rotate(-90) scale(.93 1)">3 870</text><text transform="translate(245.6 269) rotate(-90) scale(.93 1)">250</text><text transform="translate(245.6 306.5) rotate(-90) scale(.93 1)">2 000</text><text transform="translate(245.6 341) rotate(-90) scale(.93 1)">120</text><text transform="translate(245.6 385) rotate(-90) scale(.93 1)">4 250</text><text transform="translate(245.6 445) rotate(-90) scale(.93 1)">380</text><text transform="translate(330.3 202) rotate(-90) scale(.93 1)">380</text><text transform="translate(330.3 236.5) rotate(-90) scale(.93 1)">4 000</text><text transform="translate(330.3 271.5) rotate(-90) scale(.93 1)">120</text><text transform="translate(330.3 308) rotate(-90) scale(.93 1)">2 000</text><text transform="translate(330.3 367) rotate(-90) scale(.93 1)">120</text><text transform="translate(330.3 399.5) rotate(-90) scale(.93 1)">2 980</text><text transform="translate(330.3 443.5) rotate(-90) scale(.93 1)">380</text><text transform="translate(324.5 325) rotate(-90) scale(.93 1)">250</text><text transform="translate(315.3 345) rotate(-90) scale(.93 1)">900</text><text transform="translate(325 347) rotate(-90) scale(.93 1)">1 020</text><text transform="translate(422 201.6) rotate(-90) scale(.93 1)">380</text><text transform="translate(422 234.6) rotate(-90) scale(.93 1)">4 000</text><text transform="translate(422.5 271) rotate(-90) scale(.93 1)">120</text><text transform="translate(422 308) rotate(-90) scale(.93 1)">2 000</text><text transform="translate(411.5 308) rotate(-90) scale(.93 1)">900</text><text transform="translate(411.5 339.5) rotate(-90) scale(.93 1)">550</text><text transform="translate(422.5 345) rotate(-90) scale(.93 1)">250</text><text transform="translate(422 406.8) rotate(-90) scale(.93 1)">5 600</text><text transform="translate(422 485.7) rotate(-90) scale(.93 1)">380</text><text transform="translate(463 251) rotate(-90) scale(.93 1)">380</text><text transform="translate(463 287) rotate(-90) scale(.93 1)">4 060</text><text transform="translate(461.5 347.6) rotate(-90) scale(.93 1)">380</text></g>
<text x="393" y="79.2" font-family="Liberation Sans, sans-serif" font-size="13" fill="#1a1a1a" textLength="201" lengthAdjust="spacingAndGlyphs">План мансардного поверху м 1:100</text>
</svg>
</div>
</body></html>
